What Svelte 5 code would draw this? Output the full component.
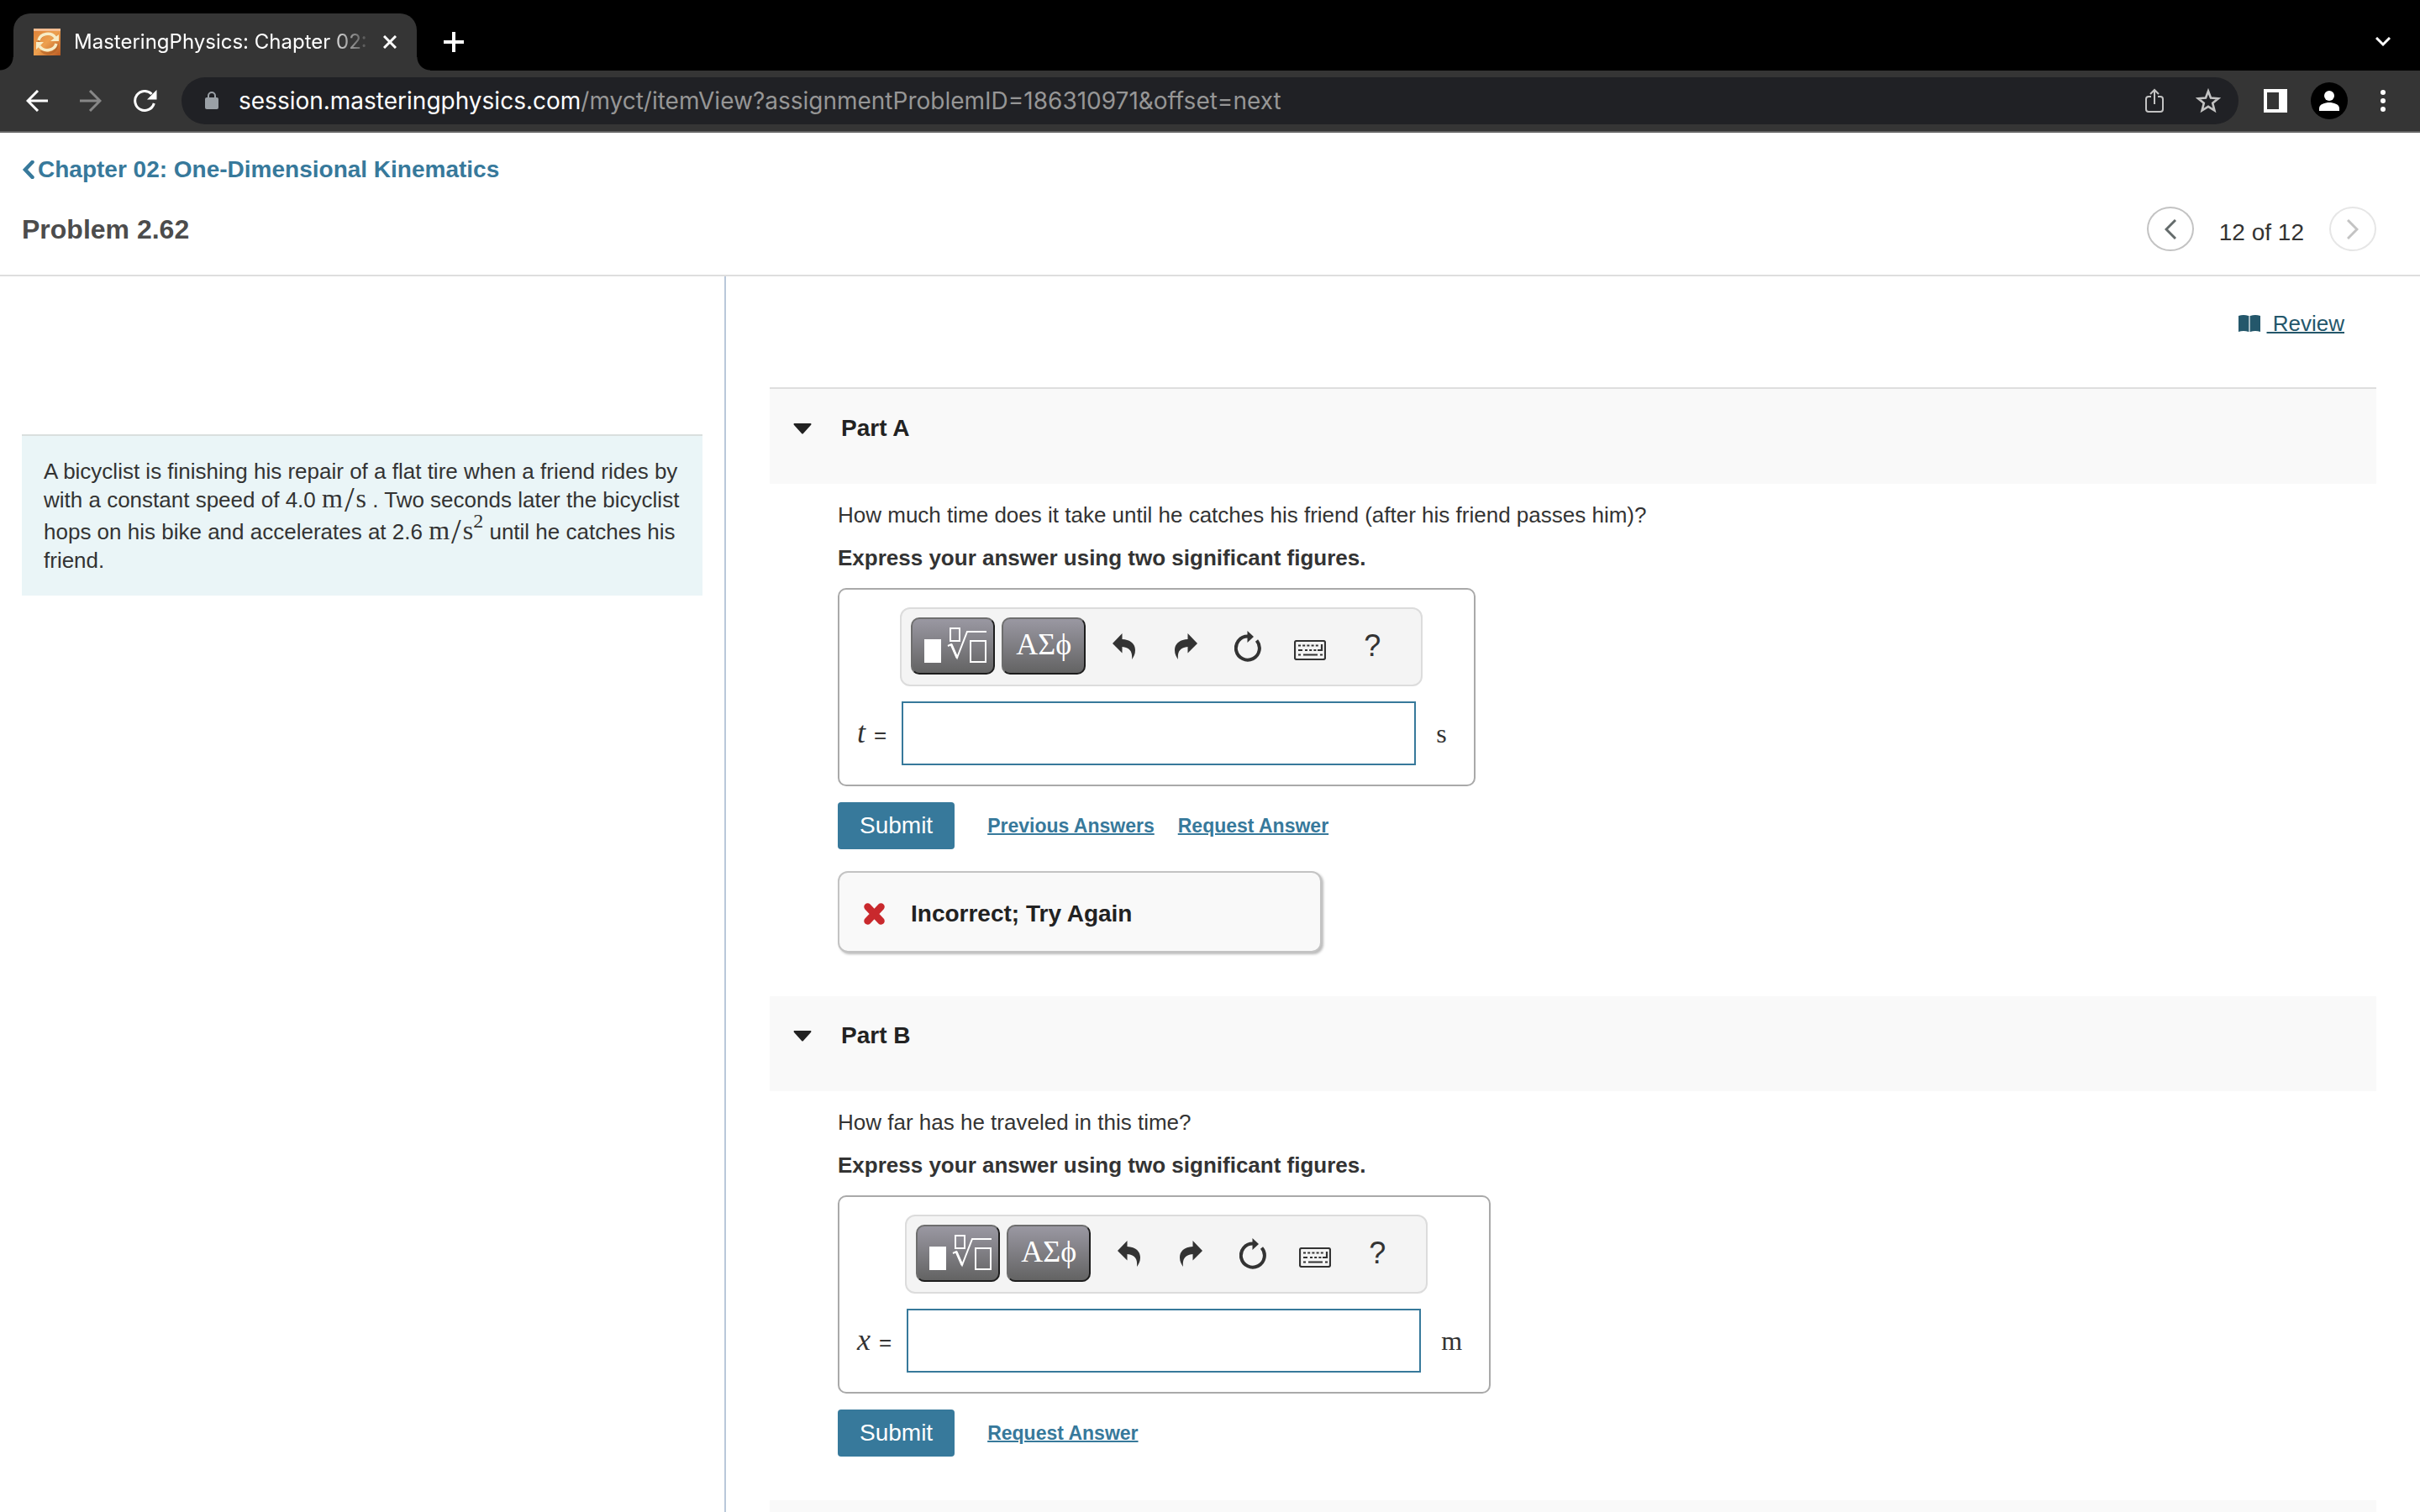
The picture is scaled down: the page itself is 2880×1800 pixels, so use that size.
<script>
let chapter = "Chapter 02: One-Dimensional Kinematics";
let problem = "Problem 2.62";

let parts = $state([
    {
        name: "Part A",
        question: "How much time does it take until he catches his friend (after his friend passes him)?",
        hint: "Express your answer using two significant figures.",
        variable: "t",
        unit: "s",
        value: "",
        links: ["Previous Answers", "Request Answer"],
        feedback: "Incorrect; Try Again",
    },
    {
        name: "Part B",
        question: "How far has he traveled in this time?",
        hint: "Express your answer using two significant figures.",
        variable: "x",
        unit: "m",
        value: "",
        links: ["Request Answer"],
    },
]);
</script>

<div class="window">
    <div class="tabs">
        <div class="tab">
            <svg class="favicon" width="32" height="32" viewBox="0 0 32 32">
                <defs>
                    <linearGradient id="fav" x1="0" y1="0" x2="1" y2="1">
                        <stop offset="0" stop-color="#dd7f36" />
                        <stop offset="0.5" stop-color="#eda04f" />
                        <stop offset="1" stop-color="#b95a22" />
                    </linearGradient>
                </defs>
                <rect width="32" height="32" fill="url(#fav)" />
                <rect width="32" height="3" fill="#f3bd92" />
                <g fill="none" stroke="#a8571f" stroke-width="3" opacity="0.5">
                    <path d="M6 17A11 11 0 0 1 27 13M28 18A11 11 0 0 1 9 26" />
                </g>
                <g fill="none" stroke="#f7ecc6" stroke-width="3.500">
                    <path d="M6 14A11 10 0 0 1 26 11M27 18A11 10 0 0 1 7 21" />
                </g>
                <path d="M30 7V15H20ZM3 25V16H12Z" fill="#f7ecc6" />
            </svg>
            <span class="tab-title">MasteringPhysics: Chapter 02:</span>
            <button class="icon-button" aria-label="Close tab">
                <svg width="16" height="16" viewBox="0 0 16 16"><path d="M1 1L15 15M15 1L1 15" stroke="#fff" stroke-width="3" /></svg>
            </button>
        </div>
        <button class="icon-button new-tab" aria-label="New tab">
            <svg width="24" height="24" viewBox="0 0 24 24"><path d="M12 0V24M0 12H24" stroke="#fff" stroke-width="4" /></svg>
        </button>
        <button class="icon-button tab-search" aria-label="Search tabs">
            <svg width="18" height="12" viewBox="0 0 18 12"><path d="M1 1L9 9L17 1" fill="none" stroke="#fff" stroke-width="3" /></svg>
        </button>
    </div>

    <div class="browser-bar">
        <div class="history">
            <button class="icon-button" aria-label="Back">
                <svg width="26" height="26" viewBox="0 0 26 26"><path d="M26 13H2M14 1L2 13L14 25" fill="none" stroke="#fff" stroke-width="3" /></svg>
            </button>
            <button class="icon-button" aria-label="Forward">
                <svg width="26" height="26" viewBox="0 0 26 26"><path d="M0 13H24M12 1L24 13L12 25" fill="none" stroke="#878787" stroke-width="3" /></svg>
            </button>
            <button class="icon-button" aria-label="Reload">
                <svg width="28" height="26" viewBox="0 0 28 26">
                    <path d="M24.3 16A11.5 11.5 0 1 1 21.5 5" fill="none" stroke="#fff" stroke-width="3" />
                    <path d="M27.500 0V11.500H16Z" fill="#fff" />
                </svg>
            </button>
        </div>
        <div class="address">
            <svg width="16" height="22" viewBox="0 0 16 22">
                <rect y="7" width="16" height="14" rx="2" fill="#9aa0a6" />
                <path d="M4 8V5A4 4 0 0 1 12 5V8" fill="none" stroke="#9aa0a6" stroke-width="2" />
            </svg>
            <div class="url" role="textbox" tabindex="0" aria-label="Address" contenteditable="true"><b>session.masteringphysics.com</b>/myct/itemView?assignmentProblemID=186310971&offset=next</div>
            <button class="icon-button" aria-label="Share">
                <svg width="22" height="30" viewBox="0 0 22 30" fill="none" stroke="#c3c3c3" stroke-width="2">
                    <path d="M7 10H4A3 3 0 0 0 1 13V25A3 3 0 0 0 4 28H18A3 3 0 0 0 21 25V13A3 3 0 0 0 18 10H15" />
                    <path d="M11 19V2M6 7L11 2L16 7" />
                </svg>
            </button>
            <button class="icon-button star" aria-label="Bookmark">
                <svg width="30" height="30" viewBox="0 0 30 30"><path d="M15 3.500L18 11.500L27 12.200L20.200 17.800L22.400 26.500L15 21.800L7.600 26.500L9.800 17.800L3 12.200L12 11.500Z" fill="none" stroke="#c3c3c3" stroke-width="2.600" /></svg>
            </button>
        </div>
        <button class="icon-button" aria-label="Side panel">
            <svg width="28" height="28" viewBox="0 0 28 28"><path fill-rule="evenodd" d="M0 0H28V28H0ZM4 4V24H18V4Z" fill="#fff" /></svg>
        </button>
        <button class="icon-button avatar" aria-label="Profile">
            <svg width="44" height="44" viewBox="0 0 44 44">
                <circle cx="22" cy="22" r="22" />
                <circle cx="22" cy="16" r="6" fill="#fff" />
                <path d="M10 34V31C10 26 17 24 22 24S34 26 34 31V34Z" fill="#fff" />
            </svg>
        </button>
        <button class="icon-button" aria-label="Menu">
            <svg width="6" height="26" viewBox="0 0 6 26" fill="#fff"><circle cx="3" cy="3" r="3" /><circle cx="3" cy="13" r="3" /><circle cx="3" cy="23" r="3" /></svg>
        </button>
    </div>

    <header>
        <a class="chapter" href="/myct/assignment">
            <svg width="15" height="22" viewBox="0 0 15 22"><path d="M12.500 2L4 11L12.500 20" fill="none" stroke="#37799b" stroke-width="4.500" stroke-linecap="round" /></svg>
            {chapter}
        </a>
        <div class="header-row">
            <h1>{problem}</h1>
            <div class="pager">
                <button class="round" aria-label="Previous problem">
                    <svg width="14" height="24" viewBox="0 0 14 24"><path d="M13 1L2 12L13 23" fill="none" stroke="#646b6b" stroke-width="3" /></svg>
                </button>
                <span class="count">12 of 12</span>
                <button class="round off" aria-label="Next problem" disabled>
                    <svg width="14" height="24" viewBox="0 0 14 24"><path d="M1 1L12 12L1 23" fill="none" stroke="#c3c3c3" stroke-width="3" /></svg>
                </button>
            </div>
        </div>
    </header>

    <main>
        <aside>
            <p class="statement">
                A bicyclist is finishing his repair of a flat tire when a friend rides by with a constant speed of 4.0 <span class="math">m<span class="slash">/</span>s</span> . Two seconds later the bicyclist hops on his bike and accelerates at 2.6 <span class="math">m<span class="slash">/</span>s<sup>2</sup></span> until he catches his friend.
            </p>
        </aside>

        <section class="work">
            <div class="review">
                <svg width="26" height="22" viewBox="0 0 26 22" fill="#24576b">
                    <path d="M0 2Q6 0 12 2V21Q6 19 0 21ZM14 2Q20 0 26 2V21Q20 19 14 21Z" />
                    <path d="M12 2H14V21H12Z" opacity="0.4" />
                </svg>
                <a href="/myct/review">&nbsp;Review</a>
            </div>

            {#each parts as part, i}
            <div class="part" class:first={i === 0}>
                <button class="part-head" aria-expanded="true">
                    <svg width="22" height="13" viewBox="0 0 22 13"><path d="M1 0H21Q22 1 21 2L12 12Q11 13 10 12L1 2Q0 1 1 0Z" fill="#222" /></svg>
                    {part.name}
                </button>
                <div class="part-body">
                    <p>{part.question}</p>
                    <p class="hint">{part.hint}</p>

                    <div class="answer">
                        <div class="toolbar">
                            <button class="dark" aria-label="Templates">
                                <svg width="96" height="64" viewBox="2 2 96 64">
                                    <path d="M16 26H36V54H16Z" fill="#fff" />
                                    <g fill="none" stroke="#fff" stroke-width="2">
                                        <path d="M47 13H58V28H47ZM71 28H89V53H71Z" />
                                        <path d="M44 34L48 32L55 48L67 17H90" />
                                        <path d="M48 32L55 48" stroke-width="3" />
                                    </g>
                                </svg>
                            </button>
                            <button class="dark symbols">ΑΣϕ</button>
                            <button class="tool" aria-label="Undo">
                                <svg width="27" height="31" viewBox="0 0 27 31"><path d="M0 12L11.500 0V7C22 7.500 27 13 27 20C27 25 25 28 23 31C24 22 21 17 11.500 16V23.500Z" fill="#333" /></svg>
                            </button>
                            <button class="tool" aria-label="Redo">
                                <svg width="27" height="31" viewBox="0 0 27 31"><path d="M27 12L15.500 0V7C5 7.500 0 13 0 20C0 25 2 28 4 31C3 22 6 17 15.500 16V23.500Z" fill="#333" /></svg>
                            </button>
                            <button class="tool" aria-label="Reset">
                                <svg width="32" height="37" viewBox="0 0 32 37">
                                    <path d="M26.500 11.500A14 14 0 1 1 16 6.600" fill="none" stroke="#333" stroke-width="4" />
                                    <path d="M15.500 0L23 7L15.500 14Z" fill="#333" />
                                </svg>
                            </button>
                            <button class="tool low" aria-label="Keyboard shortcuts">
                                <svg width="38" height="24" viewBox="0 0 38 24" fill="none" stroke="#333" stroke-width="2.200">
                                    <rect x="1" y="1" width="36" height="22" rx="2" />
                                    <path d="M5 6.500H29" stroke-dasharray="3 2.200" />
                                    <path d="M5 12H10M13 12H16M18.200 12H21.200M23.400 12H26.400" />
                                    <path d="M33 5V12H28" />
                                    <path d="M5 17.500H8M11 17.500H28M31 17.500H34" />
                                </svg>
                            </button>
                            <button class="tool help" aria-label="Help">?</button>
                        </div>
                        <label for={"answer-" + i}><i>{part.variable}</i>=</label>
                        <input id={"answer-" + i} type="text" bind:value={part.value} />
                        <span class="unit">{part.unit}</span>
                    </div>

                    <div class="actions">
                        <button class="submit">Submit</button>
                        {#each part.links as link}
                        <a href="/myct/itemView">{link}</a>
                        {/each}
                    </div>

                    {#if part.feedback}
                    <div class="feedback">
                        <svg width="27" height="28" viewBox="0 0 27 28"><path d="M5.500 5.500L21.500 22.500M21.500 5.500L5.500 22.500" stroke="#c9292d" stroke-width="8.500" stroke-linecap="round" /></svg>
                        {part.feedback}
                    </div>
                    {/if}
                </div>
            </div>
            {/each}
            <div class="work-end"></div>
        </section>
    </main>
</div>

<style>
:global(body) {
    margin: 0;
    background: #fff;
}

.window {
    display: flex;
    flex-direction: column;
    height: 100vh;
    overflow: hidden;
    color: #333;
    font-family: "Liberation Sans", Arial, sans-serif;
    font-size: 26px;
    line-height: 34px;
}

button {
    font-family: inherit;
    color: inherit;
    cursor: pointer;
}

svg {
    display: block;
    flex: none;
}

.icon-button {
    flex: none;
    padding: 0;
    border: none;
    background: none;
}

/* browser chrome */
.tabs {
    display: flex;
    align-items: center;
    flex: none;
    height: 84px;
    padding: 0 35px 0 16px;
    background: #000;
}

.tab {
    position: relative;
    display: flex;
    align-items: center;
    align-self: flex-end;
    box-sizing: border-box;
    width: 480px;
    height: 68px;
    padding: 0 24px;
    border-radius: 20px 20px 0 0;
    background: #353535;
}

.tab::before,
.tab::after {
    content: "";
    position: absolute;
    bottom: 0;
    width: 16px;
    height: 16px;
}

.tab::before {
    left: -16px;
    background: radial-gradient(circle at 0 0, #000 15px, #353535 16px);
}

.tab::after {
    right: -16px;
    background: radial-gradient(circle at 100% 0, #000 15px, #353535 16px);
}

.tab-title {
    flex: 1;
    margin: 0 16px;
    color: #fff;
    font-family: Inter, sans-serif;
    font-size: 24px;
    white-space: nowrap;
    mask-image: linear-gradient(to right, #000 302px, transparent 356px);
}

.new-tab {
    margin: 16px 0 0 32px;
}

.tab-search {
    margin: 16px 0 0 auto;
}

.browser-bar {
    display: flex;
    align-items: center;
    flex: none;
    height: 72px;
    padding: 0 41px 0 31px;
    border-bottom: 2px solid #636363;
    background: #353535;
}

.history {
    display: flex;
    gap: 38px;
}

.address {
    display: flex;
    align-items: center;
    flex: 1;
    height: 56px;
    margin: 0 30px 0 29px;
    padding: 0 21px 0 28px;
    border-radius: 28px;
    background: #202125;
}

.url {
    flex: 1;
    margin-left: 24px;
    color: #969696;
    font-family: Inter, sans-serif;
    font-size: 28px;
    outline: none;
}

.url b {
    color: #fff;
    font-weight: 400;
}

.star {
    margin-left: 38px;
}

.avatar {
    margin: 0 39px 0 28px;
}

/* page header */
header {
    flex: none;
    padding: 27px 52px 28px 26px;
    border-bottom: 2px solid #dedede;
}

a {
    color: #37799b;
}

.chapter {
    display: inline-flex;
    align-items: center;
    gap: 4px;
    font-size: 28px;
    font-weight: 700;
    line-height: 34px;
    text-decoration: none;
    vertical-align: top;
}

.header-row {
    display: flex;
    align-items: center;
    justify-content: space-between;
    margin-top: 27px;
}

h1 {
    margin: 0;
    color: #4c4c4c;
    font-size: 32px;
    line-height: 36px;
}

.pager {
    display: flex;
    align-items: center;
    gap: 30px;
}

.count {
    padding-top: 8px;
    font-size: 28px;
    line-height: 32px;
}

.round {
    display: flex;
    align-items: center;
    justify-content: center;
    box-sizing: border-box;
    width: 56px;
    height: 53px;
    padding: 0;
    border: 2px solid #c3c3c3;
    border-radius: 50%;
    background: #fff;
}

.off {
    border-color: #e6e6e6;
}

/* problem */
main {
    display: flex;
    flex: 1;
    min-height: 0;
}

aside {
    box-sizing: border-box;
    width: 30%;
    padding: 188px 26px 0;
    border-right: 2px solid #b9c8da;
}

.statement {
    margin: 0;
    padding: 25px 24px 25px 26px;
    border-top: 2px solid #dadfde;
    background: #eaf5f7;
}

.math,
.unit,
label i {
    font-family: "Liberation Serif", "Times New Roman", serif;
    font-size: 32px;
}

.math {
    line-height: 0;
}

.slash {
    margin: 0 2px;
    font-size: 42px;
    vertical-align: -5px;
}

sup {
    font-size: 24px;
    line-height: 16px;
    vertical-align: 14px;
}

.work {
    flex: 1;
    padding: 0 52px;
    overflow: hidden;
}

.review {
    display: flex;
    align-items: center;
    justify-content: flex-end;
    gap: 8px;
    padding: 39px 38px 59px 0;
}

.review a {
    color: #24576b;
    text-decoration-thickness: 2px;
}

.part-head {
    display: flex;
    align-items: center;
    gap: 35px;
    width: 100%;
    padding: 31px 28px 50px;
    border: none;
    border-top: 2px solid #fff;
    background: #f9f9f9;
    color: #222;
    font-size: 28px;
    font-weight: 700;
    line-height: 32px;
}

.first .part-head {
    border-color: #dedede;
}

.part-body {
    padding: 20px 0 50px 81px;
}

p {
    margin: 0;
}

.hint {
    margin-top: 17px;
    font-weight: 700;
}

.answer {
    display: inline-grid;
    grid-template-columns: auto 622px auto;
    gap: 18px 16px;
    align-items: center;
    margin-top: 19px;
    padding: 21px 32px 23px 21px;
    border: 2px solid #a9a9a9;
    border-radius: 10px;
    vertical-align: top;
}

.toolbar {
    display: flex;
    align-items: center;
    grid-column: 2;
    box-sizing: border-box;
    height: 94px;
    padding: 0 11px 2px;
    border: 2px solid #dcdcdc;
    border-radius: 12px;
    background: #f4f4f4;
}

.dark {
    box-sizing: border-box;
    width: 100px;
    height: 68px;
    margin-right: 8px;
    padding: 0;
    border: 2px solid;
    border-color: #6e6e6e #1d1d1d #1d1d1d #6e6e6e;
    border-radius: 10px;
    background: linear-gradient(#9a98a2, #636363);
    color: #fff;
}

.symbols {
    padding-bottom: 4px;
    font-family: "Liberation Serif", "DejaVu Serif", serif;
    font-size: 36px;
}

.tool {
    display: flex;
    align-items: center;
    justify-content: center;
    width: 74px;
    height: 68px;
    padding: 0;
    border: none;
    background: none;
}

.low {
    padding-top: 10px;
}

.help {
    font-size: 36px;
}

label {
    display: flex;
    align-items: baseline;
    grid-column: 1;
    gap: 10px;
}

label i {
    font-size: 36px;
}

input {
    box-sizing: border-box;
    width: 612px;
    height: 76px;
    margin: 0 0 0 2px;
    padding: 0 12px;
    border: 2px solid #37799b;
    border-radius: 0;
    background: #fff;
    font: inherit;
    outline: none;
}

.actions {
    display: flex;
    align-items: center;
    gap: 28px;
    margin-top: 19px;
}

.actions a {
    font-size: 23px;
    font-weight: 700;
    text-decoration-thickness: 2px;
}

.submit {
    height: 56px;
    margin-right: 11px;
    padding: 0 26px;
    border: none;
    border-radius: 4px;
    background: #37799b;
    color: #fff;
    font-size: 28px;
}

.feedback {
    display: flex;
    align-items: center;
    gap: 30px;
    box-sizing: border-box;
    width: 576px;
    height: 97px;
    margin-top: 26px;
    padding: 4px 28px 0;
    border: 2px solid #c3c3c3;
    border-radius: 12px;
    background: #f9f9f9;
    box-shadow: 2px 2px 3px #bbb;
    color: #222;
    font-size: 28px;
    font-weight: 700;
    line-height: 32px;
}

.work-end {
    height: 113px;
    border-top: 2px solid #fff;
    background: #f9f9f9;
}
</style>
